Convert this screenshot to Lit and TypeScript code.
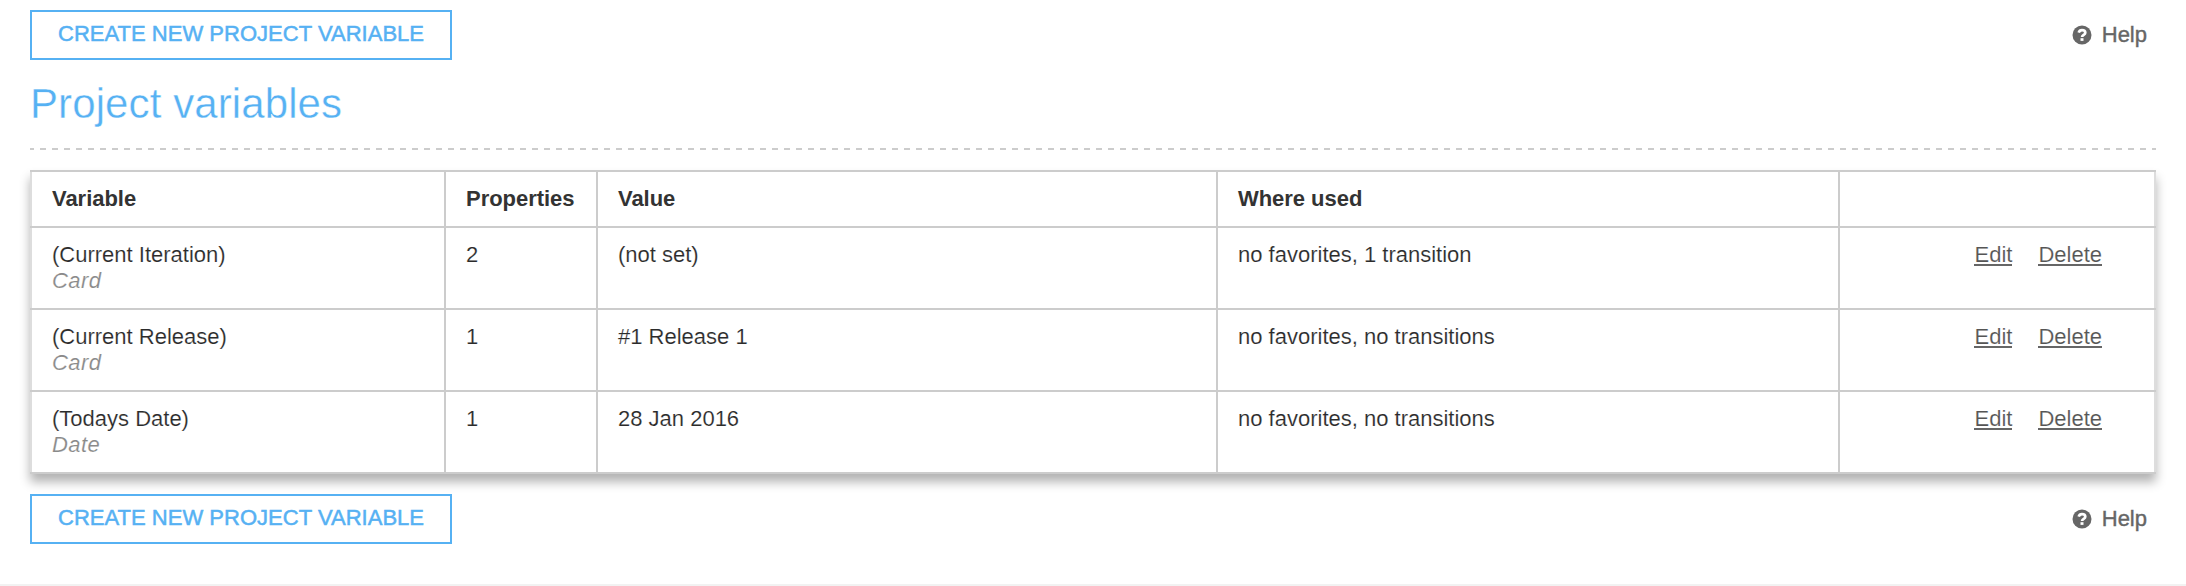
import { LitElement, html, css } from "lit";
import { customElement, property } from "lit/decorators.js";

interface Row { name: string; type: string; count: string; value: string; used: string; }

const rows: Row[] = [
  { name: "(Current Iteration)", type: "Card", count: "2", value: "(not set)", used: "no favorites, 1 transition" },
  { name: "(Current Release)", type: "Card", count: "1", value: "#1 Release 1", used: "no favorites, no transitions" },
  { name: "(Todays Date)", type: "Date", count: "1", value: "28 Jan 2016", used: "no favorites, no transitions" },
];

@customElement("action-bar")
class ActionBar extends LitElement {
  static styles = css`
    :host { display: flex; justify-content: space-between; height: 50px; padding-right: 9px; }
    .create { box-sizing: border-box; width: 422px; height: 50px; margin: 0; padding: 0 0 2px; border: 2px solid #56b1f3; background: #fff;
      color: #56b1f3; font: 22px "Liberation Sans", sans-serif; letter-spacing: 0.02px; white-space: nowrap; text-align: center;
      -webkit-text-stroke: 0.5px #56b1f3; }
    .help { display: flex; align-items: center; height: 49px; color: #666; font-size: 22px; text-decoration: none; -webkit-text-stroke: 0.4px #666; }
    .icon { width: 20px; height: 20px; margin-right: 10px; }
  `;
  render() {
    return html`
      <button class="create">CREATE NEW PROJECT VARIABLE</button>
      <a class="help">
        <svg class="icon" viewBox="0 0 20 20">
          <circle cx="10" cy="10" r="9.5" fill="#666"/>
          <path d="M6.7 7.6C7.2 5.9 8.4 5.1 10 5.1c1.9 0 3.3 1 3.3 2.6 0 2.2-3.2 2.1-3.2 4.3" fill="none" stroke="#fff" stroke-width="2.7"/>
          <path d="M8.5 13.2h3v2.7h-3z" fill="#fff"/>
        </svg><span>Help</span>
      </a>`;
  }
}

@customElement("variables-table")
class VariablesTable extends LitElement {
  @property({ attribute: false }) rows: Row[] = [];
  static styles = css`
    :host { display: block; box-shadow: 0 8px 10px rgba(0, 0, 0, 0.3); background: #fff; }
    .row { display: grid; grid-template-columns: 414px 152px 620px 622px 1fr; height: 80px; border-bottom: 2px solid #ccc; }
    .row.head { height: 54px; border-top: 2px solid #ccc; font-weight: bold; color: #333; }
    .cell { box-sizing: border-box; padding: 14px 0 0 20px; border-left: 2px solid #ccc; line-height: 26px; white-space: nowrap; }
    .head .cell { letter-spacing: -0.04px; }
    .row:not(.head) .cell { -webkit-text-stroke: 0.15px #fff; }
    .cell:first-child { border-left-color: #ddd; }
    .cell:last-child { border-right: 2px solid #ddd; }
    .type { color: #8a8a8a; font-style: italic; letter-spacing: 0.4px; }
    .links { display: flex; align-items: flex-start; justify-content: flex-end; gap: 26px; padding-right: 52px; color: #555; }
    .link { height: 22px; border-bottom: 2px solid #666; line-height: 26px; }
  `;
  render() {
    return html`
      <div class="row head">
        ${["Variable", "Properties", "Value", "Where used", ""].map((t) => html`<div class="cell">${t}</div>`)}
      </div>
      ${this.rows.map((r) => html`<div class="row">
        <div class="cell"><div>${r.name}</div><div class="type">${r.type}</div></div>
        <div class="cell">${r.count}</div>
        <div class="cell">${r.value}</div>
        <div class="cell">${r.used}</div>
        <div class="cell links"><span class="link">Edit</span><span class="link">Delete</span></div>
      </div>`)}`;
  }
}

@customElement("app-root")
class AppRoot extends LitElement {
  static styles = css`
    :host { display: block; box-sizing: border-box; height: 586px; padding: 10px 30px 0; background: #fff;
      border-bottom: 2px solid #f2f2f2; font: 22px "Liberation Sans", sans-serif; color: #2b2b2b; overflow: hidden; }
    .title { height: 88px; margin: 0; color: #56b1f3; font-size: 42px; font-weight: normal; line-height: 88px; letter-spacing: 0.1px;
      -webkit-text-stroke: 0.4px #fff; }
    .dash { height: 2px; background: repeating-linear-gradient(90deg, #ccc 0 6px, transparent 6px 12px) -2px 0 / 2200px 2px; }
    .table { margin: 20px 0; }
  `;
  render() {
    return html`
      <action-bar></action-bar>
      <h1 class="title">Project variables</h1>
      <div class="dash"></div>
      <variables-table class="table" .rows=${rows}></variables-table>
      <action-bar></action-bar>`;
  }
}
